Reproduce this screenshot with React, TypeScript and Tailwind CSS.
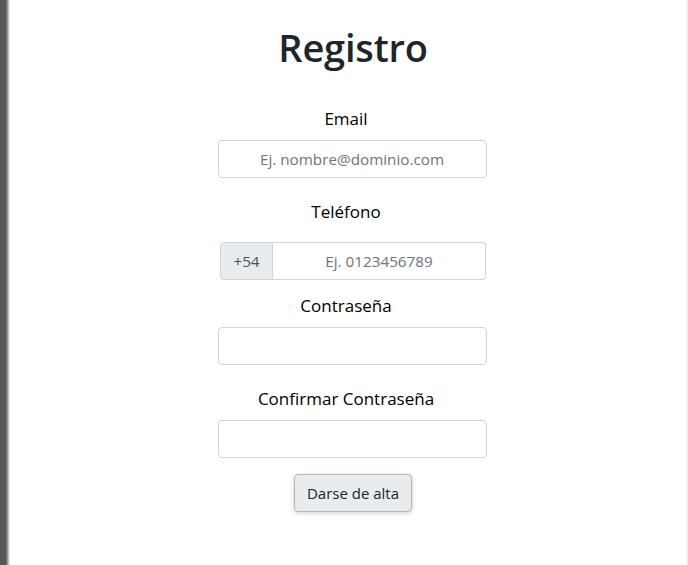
import React from "react";

const font = { fontFamily: '"Segoe UI", "Open Sans", "Noto Sans", sans-serif' };

export default function App() {
  return (
    <div className="flex h-[565px] w-[688px] bg-white" style={font}>
      {/* window edge shadow */}
      <div className="w-[10px] shrink-0 bg-[linear-gradient(to_right,#555_0,#585858_6px,#fff_10px)]"></div>

      <div className="flex flex-1 flex-col items-center pl-[10px] text-[#212529]">
        <h1 className="mt-[23px] text-[38px] font-semibold leading-[48px] tracking-[-0.2px]">Registro</h1>

        <form className="mt-[36px] flex w-[269px] -translate-x-px flex-col items-center">
          <label className="mr-[12px] mb-[9px] text-[17px] leading-6 text-black">Email</label>
          <input
            type="email"
            placeholder="Ej. nombre@dominio.com"
            className="h-[38px] w-full rounded border border-[#ced4da] px-3 text-center text-[15.25px] placeholder:text-[#6c757d] outline-none"
          />

          <label className="mt-[22px] mr-[12px] mb-[18px] text-[17px] leading-6 text-black">Teléfono</label>
          <div className="ml-[2px] flex h-[38px] w-[266px]">
            <span className="flex w-[53px] shrink-0 items-center justify-center rounded-l border border-[#ced4da] bg-[#e9ecef] text-[15.25px] text-[#495057]">
              +54
            </span>
            <input
              type="tel"
              placeholder="Ej. 0123456789"
              className="h-full min-w-0 flex-1 rounded-r border border-l-0 border-[#ced4da] px-3 text-center text-[15.25px] placeholder:text-[#6c757d] outline-none"
            />
          </div>

          <label className="mt-[14px] mr-[12px] mb-[9px] text-[17px] leading-6 text-black">Contraseña</label>
          <input
            type="password"
            className="h-[38px] w-full rounded border border-[#ced4da] px-3 text-[15.25px] outline-none"
          />

          <label className="mt-[22px] mr-[12px] mb-[9px] text-[17px] leading-6 text-black">Confirmar Contraseña</label>
          <input
            type="password"
            className="h-[38px] w-full rounded border border-[#ced4da] px-3 text-[15.25px] outline-none"
          />

          <button
            type="button"
            className="mt-[16px] ml-[2px] h-[38px] w-[118px] rounded border border-[#b4b8bc] bg-[#e9ecef] text-[15px] text-[#212529] shadow-[0_1px_4px_rgba(0,0,0,0.2)]"
          >
            Darse de alta
          </button>
        </form>
      </div>

      <div className="w-[2px] shrink-0 bg-[#f0f0f0]"></div>
    </div>
  );
}
